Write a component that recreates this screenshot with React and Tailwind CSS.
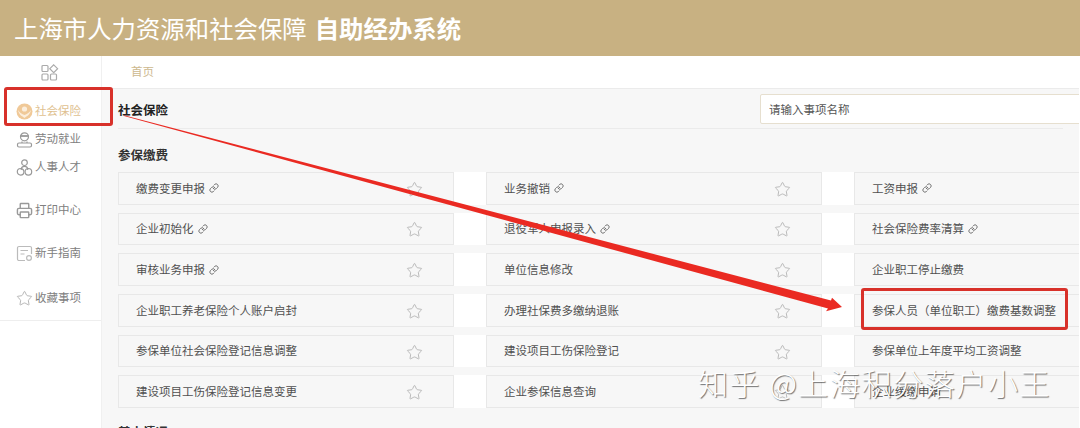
import React from 'react'
import { Star, Link, Printer } from 'lucide-react'

const cjk = { fontFamily: '"Noto Sans CJK SC", "Noto Sans", sans-serif' }

const rows = [
  [
    { name: '缴费变更申报', link: true },
    { name: '业务撤销', link: true },
    { name: '工资申报', link: true },
  ],
  [
    { name: '企业初始化', link: true },
    { name: '退役军人申报录入', link: true },
    { name: '社会保险费率清算', link: true },
  ],
  [
    { name: '审核业务申报', link: true },
    { name: '单位信息修改' },
    { name: '企业职工停止缴费' },
  ],
  [
    { name: '企业职工养老保险个人账户启封' },
    { name: '办理社保费多缴纳退账' },
    { name: '参保人员（单位职工）缴费基数调整' },
  ],
  [
    { name: '参保单位社会保险登记信息调整' },
    { name: '建设项目工伤保险登记' },
    { name: '参保单位上年度平均工资调整' },
  ],
  [
    { name: '建设项目工伤保险登记信息变更' },
    { name: '企业参保信息查询' },
    { name: '企业缓缴申请' },
  ],
]

function GridIcon() {
  return (
    <svg width="18" height="17" viewBox="0 0 18 17" fill="none" stroke="#aaa" strokeWidth="1.2">
      <rect x="1" y="1.5" width="6" height="6" rx="1" />
      <rect x="1" y="10" width="6" height="6" rx="1" />
      <rect x="9.5" y="10" width="6" height="6" rx="1" />
      <path d="M12.7 0.8 L16.6 4.7 L12.7 8.6 L8.8 4.7 Z" />
    </svg>
  )
}

function InsuranceIcon() {
  return (
    <svg width="17" height="17" viewBox="0 0 17 17">
      <circle cx="8.5" cy="8.5" r="8" fill="#f0c998" />
      <circle cx="8.5" cy="6" r="2.6" fill="#fbeedd" />
      <path d="M2 7 C3 12 6 13 8.5 15 C11 13 14 12 15 7 C13 10 11 11 8.5 12 C6 11 4 10 2 7 Z" fill="#fbeedd" />
    </svg>
  )
}

function WorkerIcon() {
  return (
    <svg width="17" height="17" viewBox="0 0 17 17" fill="none" stroke="#999" strokeWidth="1.2">
      <circle cx="8.5" cy="5.8" r="4" />
      <path d="M4.3 5 H12.7" strokeWidth="1.8" />
      <path d="M6 10.5 V12 M11 10.5 V12" />
      <rect x="1.5" y="12" width="14" height="4" rx="1.5" />
    </svg>
  )
}

function TalentIcon() {
  return (
    <svg width="17" height="17" viewBox="0 0 17 17" fill="none" stroke="#999" strokeWidth="1.2">
      <circle cx="8.5" cy="3.7" r="2.8" />
      <path d="M5.2 11 C5.2 8.6 6.6 7.4 8.5 7.4 C10.4 7.4 11.8 8.6 11.8 11" />
      <circle cx="4.6" cy="12.8" r="3.3" />
      <circle cx="12.4" cy="12.8" r="3.3" />
    </svg>
  )
}

function GuideIcon() {
  return (
    <svg width="17" height="17" viewBox="0 0 17 17" fill="none" stroke="#bbb" strokeWidth="1.2">
      <path d="M9 15.5 H3 A1.5 1.5 0 0 1 1.5 14 V3 A1.5 1.5 0 0 1 3 1.5 H14 A1.5 1.5 0 0 1 15.5 3 V9" />
      <path d="M4.5 5.5 H12 M4.5 9 H8.5" />
      <circle cx="13" cy="13" r="2.4" />
    </svg>
  )
}

function SideItem({ icon, label, active, className }) {
  return (
    <div className={`flex items-center pl-4 h-[20px] ${className}`}>
      <span className="w-[19px] shrink-0 flex items-center">{icon}</span>
      <span className={`text-[11.5px] whitespace-nowrap ${active ? 'text-[#e0c190]' : 'text-[#808080]'}`}>{label}</span>
    </div>
  )
}

function Card({ item }) {
  return (
    <div className="h-[32.5px] bg-[#f7f7f7] border border-[#e8e8e8] flex items-center pl-[17px] pr-[30px] relative">
      <span className="text-[11.5px] text-[#505050] whitespace-nowrap">{item.name}</span>
      {item.link && <Link size={10} strokeWidth={2.2} className="text-[#666] ml-[4px]" />}
      <Star size={17} strokeWidth={1.3} className="text-[#b5b5b5] ml-auto mt-[2px]" />
    </div>
  )
}

export default function App() {
  return (
    <div className="w-[1080px] h-[428px] overflow-hidden relative bg-white" style={cjk}>
      <header className="h-14 bg-[#c8b182] flex items-center pl-[14px] text-white text-[24.4px] whitespace-nowrap">
        <span>上海市人力资源和社会保障</span>
        <span className="font-bold ml-2">自助经办系统</span>
      </header>

      <div className="flex h-[372px]">
        {/* 侧边栏 */}
        <aside className="w-[102px] shrink-0 self-start h-[265px] border-r border-b border-[#eeeeee] bg-white">
          <div className="flex justify-center pt-2 pr-[2px]"><GridIcon /></div>
          <SideItem icon={<InsuranceIcon />} label="社会保险" active className="mt-[20px]" />
          <SideItem icon={<WorkerIcon />} label="劳动就业" className="mt-[8px]" />
          <SideItem icon={<TalentIcon />} label="人事人才" className="mt-[8px]" />
          <SideItem icon={<Printer size={17} strokeWidth={2} className="text-[#999]" />} label="打印中心" className="mt-[23px]" />
          <SideItem icon={<GuideIcon />} label="新手指南" className="mt-[23px]" />
          <SideItem icon={<Star size={17} strokeWidth={1.2} className="text-[#aaa]" />} label="收藏事项" className="mt-[25px]" />
        </aside>

        <div className="w-[978px] h-[428px] bg-[#f7f7f7] border-l border-[#f0f0f0] -ml-px overflow-hidden">
          {/* 面包屑 */}
          <div className="h-[33px] bg-white border-b border-[#ebebeb] pl-[29px] flex items-center">
            <span className="text-[11.5px] text-[#cdb88e]">首页</span>
          </div>

          {/* 标题和搜索 */}
          <div className="h-[40px] mx-4 border-b border-[#ebebeb] flex items-center relative">
            <h1 className="text-[12.5px] font-bold text-[#222] pt-[3px]">社会保险</h1>
            <input
              readOnly
              placeholder="请输入事项名称"
              className="absolute left-[642px] top-[5px] w-[340px] h-[30px] bg-white border border-[#e6dfcf] rounded-[2px] pl-2 text-[11.5px] outline-none placeholder:text-[#555]"
            />
          </div>

          <div className="pl-4">
            <h2 className="text-[12.5px] font-bold text-[#333] mt-[17px] mb-[8px] leading-[18px]">参保缴费</h2>
            <div className="flex flex-col gap-y-[8.2px]">
              {rows.map((row, i) => (
                <div key={i} className="grid grid-cols-[336px_336px_336px] gap-x-[32px] bg-white w-[1008px]">
                  {row.map((item) => <Card key={item.name} item={item} />)}
                </div>
              ))}
            </div>
            <h2 className="text-[12.5px] font-bold text-[#333] mt-[15px] leading-[18px]">基本情况</h2>
          </div>
        </div>
      </div>

      {/* 截图上的红色标注 */}
      <div className="absolute left-[4px] top-[87px] w-[109px] h-[39px] border-[3px] border-[#d8312a] rounded-[3px]" />
      <div className="absolute left-[861px] top-[288px] w-[207px] h-[42px] border-[3px] border-[#d8312a] rounded-[3px]" />
      <svg className="absolute left-0 top-0 pointer-events-none" width="1080" height="428">
        <polygon
          points="124,115.2 831,300.5 832,297.7 842,307 826,311.3 828,308.5 124,116"
          fill="#ea2a22"
        />
      </svg>

      {/* 水印 */}
      <div className="absolute left-[698px] top-[362px] text-[30px] font-light tracking-[1.6px] leading-[40px] text-white whitespace-nowrap [text-shadow:1px_1px_1px_rgba(0,0,0,0.55)]">
        知乎 @上海积分落户小王
      </div>
    </div>
  )
}
